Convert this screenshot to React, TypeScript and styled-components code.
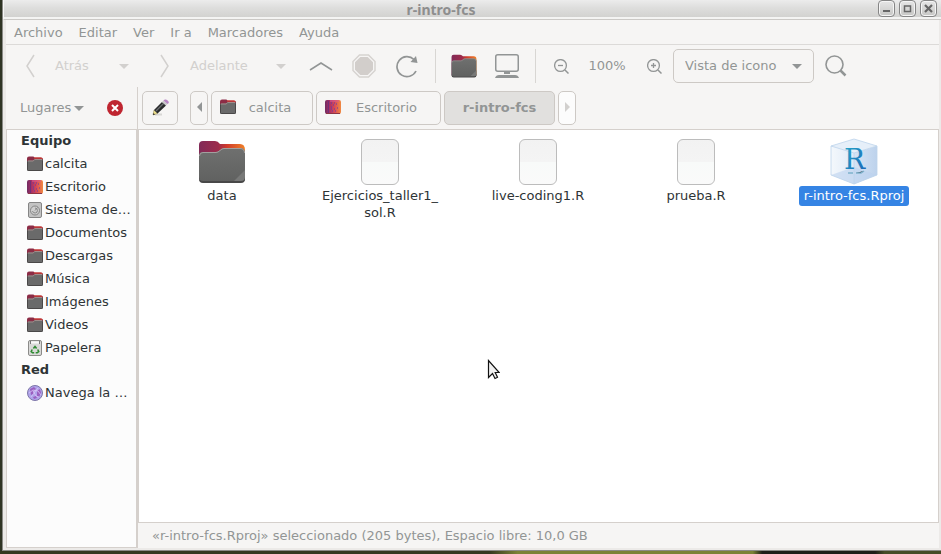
import React, { useId } from "react";
import styled, { createGlobalStyle, css } from "styled-components";

const GlobalStyle = createGlobalStyle`
  *, *::before, *::after { box-sizing: border-box; }
  body {
    margin: 0;
    font: 13px/17px "DejaVu Sans", sans-serif;
    color: #2e3436;
  }
  button, select { font: inherit; color: inherit; }
  svg { display: block; flex: none; }
`;

const color = {
  bg: "#f6f5f4",
  frame: "#eceae8",
  border: "#d5d0cc",
  muted: "#929595",
  disabled: "#d2d0ce",
  selected: "#3584e4",
};

/* ---------- window frame ---------- */

const Desktop = styled.div`
  min-height: 100vh;
  display: flex;
  padding: 0 0 3px 2px;
  background:
    linear-gradient(90deg, #34381f 0 52%, #7b8236 55% 80%, #1d1e18 81% 93%, #454b26 94%) bottom / 100% 3px no-repeat,
    #2f3424;
`;

const Window = styled.div`
  flex: 1;
  min-width: 0;
  display: flex;
  flex-direction: column;
  background: ${color.frame};
  border-left: 1px solid #8a8a86;
  border-bottom: 1px solid #8a8a86;
`;

const TitleBar = styled.header`
  display: flex;
  height: 20px;
  padding-right: 4px;
  border-left: 1px solid #f7f7f7;
  border-bottom: 1px solid #cbc9c6;
  background: linear-gradient(#ececec, #dededd 40%, #d2d2d0 90%, #f4f4f3 91%);
`;

const Title = styled.h1`
  flex: 1;
  margin: 0;
  font: bold 14px/19px "Noto Sans", sans-serif;
  text-align: center;
  color: #8e8e8e;
`;

const WindowControls = styled.div`
  display: flex;
  gap: 4px;
`;

const ControlButton = styled.button`
  display: grid;
  place-items: center;
  width: 17px;
  height: 17px;
  padding: 0;
  border: 1px solid #858585;
  border-radius: 4px;
  background: linear-gradient(#e6e6e6, #c6c6c4);
  box-shadow: inset 0 0 0 1px #f5f5f5;
`;

const Content = styled.div`
  flex: 1;
  display: flex;
  flex-direction: column;
  margin: 0 2px 2px 3px;
  background: ${color.bg};
  color: ${color.muted};
`;

/* ---------- menu and toolbar ---------- */

const MenuBar = styled.nav`
  display: flex;
  border-bottom: 1px solid #dcdad8;
`;

const MenuItem = styled.button`
  height: 24px;
  padding: 0 8px;
  border: 0;
  background: none;
`;

const ToolBar = styled.div`
  display: flex;
  align-items: center;
  height: 42px;
  padding-left: 19px;
`;

const ToolButton = styled.button<{ $width: number }>`
  display: flex;
  align-items: center;
  justify-content: center;
  gap: 20px;
  flex: none;
  width: ${(p) => p.$width}px;
  height: 34px;
  padding: 0;
  border: 0;
  background: none;
  &:disabled { color: ${color.disabled}; }
`;

const HistoryButton = styled(ToolButton)`
  justify-content: flex-start;
  padding-bottom: 1px;
`;

const Spacer = styled.div<{ $width: number }>`
  flex: none;
  width: ${(p) => p.$width}px;
`;

const Separator = styled.div<{ $gap: number }>`
  flex: none;
  width: 1px;
  height: 34px;
  margin: 0 ${(p) => p.$gap}px;
  background: #d8d6d3;
`;

const ZoomValue = styled.span`
  flex: none;
  width: 56px;
  padding-bottom: 1px;
  text-align: center;
`;

const DropDown = styled.div`
  display: inline-grid;
  align-items: center;
  flex: none;
  > * { grid-area: 1 / 1; }
  > svg { justify-self: end; pointer-events: none; }
`;

const ViewDropDown = styled(DropDown)`
  width: 141px;
  margin: 0 5px 0 2px;
  > svg { margin-right: 12px; }
`;

const outlined = css`
  border: 1px solid #cdc9c5;
  border-radius: 5px;
`;

const ViewSelect = styled.select`
  appearance: none;
  ${outlined}
  width: 100%;
  height: 34px;
  padding: 0 11px 2px;
  background: transparent;
`;

/* ---------- body ---------- */

const Body = styled.div`
  flex: 1;
  display: grid;
  grid-template-columns: 132px minmax(0, 1fr);
`;

const Column = styled.div`
  display: flex;
  flex-direction: column;
  min-width: 0;
`;

const SideHeader = styled.div`
  display: flex;
  align-items: center;
  justify-content: space-between;
  height: 42px;
  padding: 0 14px;
  border-right: 1px solid ${color.border};
`;

const PlacesDropDown = styled(DropDown)`
  width: 64px;
`;

const PlacesSelect = styled.select`
  appearance: none;
  width: 100%;
  padding: 0 0 2px;
  border: 0;
  background: transparent;
`;

const IconButton = styled.button`
  padding: 0;
  border: 0;
  background: none;
`;

const Places = styled.nav`
  flex: 1;
  border: 1px solid ${color.border};
  border-right-width: 2px;
  background: #fcfcfc;
  color: #2e3436;
`;

const PlacesHeading = styled.h2`
  margin: 0;
  padding-left: 14px;
  font: bold 13px/22px "DejaVu Sans", sans-serif;
`;

const PlacesList = styled.ul`
  list-style: none;
  margin: 0;
  padding: 0 0 0 20px;
`;

const PlaceLink = styled.a`
  display: flex;
  align-items: center;
  gap: 2px;
  height: 23px;
  color: inherit;
  text-decoration: none;
  white-space: nowrap;
`;

const PathBar = styled.div`
  display: flex;
  align-items: center;
  gap: 3px;
  height: 42px;
  padding-left: 4px;
`;

const PathButton = styled.button<{ $width: number; $current?: boolean }>`
  ${outlined}
  display: flex;
  align-items: center;
  justify-content: center;
  flex: none;
  width: ${(p) => p.$width}px;
  height: 34px;
  padding: 0 8px 2px;
  background: ${(p) => (p.$current ? "#e1e0de" : "transparent")};
  font-weight: ${(p) => (p.$current ? "bold" : "normal")};
  > span { flex: 1; }
`;

const EditButton = styled(PathButton)`
  margin-right: 9px;
`;

const NextButton = styled(PathButton)`
  background: #fcfcfc;
`;

const Files = styled.main`
  flex: 1;
  display: grid;
  grid-template-columns: repeat(auto-fill, 158px);
  align-content: start;
  padding: 8px 0 0 4px;
  border: 1px solid ${color.border};
  background: #fff;
  color: #2e3436;
`;

const FileItem = styled.a`
  display: flex;
  flex-direction: column;
  align-items: center;
  color: inherit;
  text-decoration: none;
`;

const FileLabel = styled.span<{ $selected?: boolean }>`
  max-width: 130px;
  padding: 1px 5px 2px;
  border-radius: 3px;
  text-align: center;
  overflow-wrap: break-word;
  ${(p) => p.$selected && css`
    background: ${color.selected};
    color: #fff;
  `}
`;

const StatusBar = styled.footer`
  height: 25px;
  padding: 0 14px;
  line-height: 25px;
`;

const Pointer = styled.svg`
  position: absolute;
  left: 487px;
  top: 359px;
  pointer-events: none;
`;

/* ---------- icons ---------- */

const Triangle = () => (
  <svg width="10" height="5" viewBox="0 0 10 5"><path d="M0 0h10L5 5z" fill="currentColor" /></svg>
);

const SideTriangle = ({ right }: { right?: boolean }) => (
  <svg width="5" height="10" viewBox="0 0 5 10">
    <path d={right ? "M0 0l5 5-5 5z" : "M5 0L0 5l5 5z"} fill={right ? color.disabled : color.muted} />
  </svg>
);

const Chevron = ({ d, w, h }: { d: string; w: number; h: number }) => (
  <svg width={w} height={h} viewBox={`0 0 ${w} ${h}`} fill="none" stroke="currentColor" strokeWidth="1.5"><path d={d} /></svg>
);

function Folder({ size }: { size: number }) {
  const id = useId();
  return (
    <svg width={size} height={size} viewBox="0 0 48 48">
      <defs>
        <linearGradient id={id + "b"}>
          <stop offset="0" stopColor="#812a57" />
          <stop offset=".42" stopColor="#9d2b4b" />
          <stop offset=".6" stopColor="#cf3a2c" />
          <stop offset="1" stopColor="#f08228" />
        </linearGradient>
        <linearGradient id={id + "f"} x2="0" y2="1">
          <stop offset="0" stopColor="#6f706f" />
          <stop offset="1" stopColor="#606160" />
        </linearGradient>
      </defs>
      <path d="M1 41V7q0-4 4-4h12q3 0 5 3h20q5 0 5 6v29z" fill={`url(#${id}b)`} />
      <path d="M1 18q0-4 4-4h13q2 0 4-2t4-2h16q5 0 5 5v25q0 4-4 4H5q-4 0-4-4z" fill={`url(#${id}f)`} />
      <path d="M35 44l12-12v8q0 4-4 4z" fill="#787978" />
      <path d="M1 39v2q0 4 4 4h38q4 0 4-4v-2q0 4-4 4H5q-4 0-4-4z" fill="#484848" />
      <path d="M1.500 18q0-3.500 3.500-3.500h13q2 0 4-2t4-2h16q4.500 0 4.500 4.500" fill="none" stroke="#a2a09f" />
    </svg>
  );
}

const SmallFolder = () => (
  <svg width="16" height="16" viewBox="0 0 16 16">
    <path d="M0 14V2.500Q0 .5 2 .5h4q1 0 1.500 1H14q2 0 2 2V14z" fill="#8c2c46" />
    <path d="M7 2h7q1 0 1.200 1" fill="none" stroke="#e0402e" />
    <path d="M0 6q0-1.500 1.500-1.500H6L7.500 3H14q2 0 2 2v8.500q0 1.500-1.500 1.500h-13Q0 15 0 13.500z" fill="#6a6a6a" />
    <path d="M.5 5.500v8q0 1 1 1h13q1 0 1-1v-9" fill="none" stroke="#4a4848" />
    <path d="M1 5h5.200l1.500-1.500H15" fill="none" stroke="#a08c8a" />
  </svg>
);

function DesktopIcon() {
  const id = useId();
  return (
    <svg width="16" height="16" viewBox="0 0 16 16">
      <defs>
        <linearGradient id={id}>
          <stop offset="0" stopColor="#702c61" />
          <stop offset=".25" stopColor="#a32e68" />
          <stop offset=".6" stopColor="#d94a55" />
          <stop offset="1" stopColor="#f08a42" />
        </linearGradient>
      </defs>
      <rect y="1" width="16" height="14" rx="2" fill={`url(#${id})`} />
      <path d="M3.500 2v12" stroke="#6f3179" />
      <path d="M5 2h9" stroke="#d85c9a" />
      <path d="M6 4h1M8 6h1M6 8h1M9 10h1M7 12h1M11 5h1M12 9h1M10 12h1M6 10h1M9 4h1" stroke="#5d3bb0" />
      <path d="M1 14.500h14" stroke="#8d3544" />
    </svg>
  );
}

const DriveIcon = () => (
  <svg width="16" height="16" viewBox="0 0 16 16" fill="none" stroke="#858585">
    <rect x="1.500" y=".5" width="13" height="15" rx="1.500" fill="#c3c3c3" />
    <circle cx="8" cy="8.500" r="4.500" fill="#cfcfcf" />
    <path d="M5.500 9a2.500 2.500 0 1 0 2.500-3M8 8.500l2.500-3" />
  </svg>
);

const TrashIcon = () => (
  <svg width="16" height="16" viewBox="0 0 16 16">
    <rect x="1.500" y=".5" width="13" height="15" rx="1.500" fill="#d9d9d8" stroke="#8b8b89" />
    <path d="M3 2.500h10" stroke="#f9f9f9" strokeWidth="2" />
    <path d="M3.500 1v3M12.500 1v3" stroke="#777" />
    <path d="M6.400 8.500L8 6.500l1.600 2M10.700 9.500l1 2-1.500 1.300H8.700M5.200 9.500l-1 2 1.300 1.300h1.700" fill="none" stroke="#2f8b32" strokeWidth="1.600" />
  </svg>
);

const NetworkIcon = () => (
  <svg width="16" height="16" viewBox="0 0 16 16">
    <circle cx="8" cy="8" r="7.500" fill="#b0a4ea" stroke="#7d76a8" />
    <path d="M3 4l4-2 2 2-3 2 1 3-3 1zM10 6l3-2 1 4-2 4-2-1zM6 12l3-1 1 2-3 1z" fill="#9a5fc0" />
    <path d="M2 8l4-3 5 1 3 4M4 12l3-4 4-5M6 6l3 5 3 1" fill="none" stroke="#d8c4f6" strokeWidth=".8" />
  </svg>
);

const CloseIcon = () => (
  <svg width="16" height="16" viewBox="0 0 16 16">
    <circle cx="8" cy="8" r="8" fill="#bf2530" />
    <path d="M5 5l6 6M11 5l-6 6" stroke="#fff" strokeWidth="2" />
  </svg>
);

const PencilIcon = () => (
  <svg width="17" height="17" viewBox="0 0 17 17">
    <path d="M3 15.500h7" stroke="#d8d7d5" strokeWidth="2" />
    <path d="M1 16l1-5 3.500 3.500z" fill="#efe08b" stroke="#8d8450" strokeWidth=".5" />
    <path d="M1 16l.5-2L3 15.500z" fill="#222" />
    <path d="M2 11l8-8 4 3.500-8.500 8z" fill="#292b2c" />
    <path d="M4 12l8-8" stroke="#6b6e70" strokeWidth="1.300" />
    <path d="M10 3l1.500-1.500L15.500 5 14 6.500z" fill="#c9c9ca" />
    <path d="M11.500 1.500q1-1.500 2.500-1t2.500 2T15.500 5z" fill="#b987c5" />
  </svg>
);

const StopIcon = () => (
  <svg width="24" height="24" viewBox="0 0 24 24">
    <path d="M7.500 1h9L23 7.500v9L16.500 23h-9L1 16.500v-9z" fill="none" stroke="#d6d3d0" strokeWidth="1.500" />
    <path d="M8.300 3h7.400L21 8.300v7.400L15.700 21H8.300L3 15.700V8.300z" fill="#d2cecb" />
  </svg>
);

const ReloadIcon = () => (
  <svg width="24" height="24" viewBox="0 0 24 24">
    <path d="M19 5.500A10 10 0 1 0 21 17" fill="none" stroke={color.muted} strokeWidth="1.700" />
    <path d="M21 2l1.500 7-7-1z" fill={color.muted} />
  </svg>
);

const ComputerIcon = () => (
  <svg width="24" height="24" viewBox="0 0 24 24">
    <rect x=".75" y=".75" width="22.500" height="16.500" rx="2" fill="none" stroke={color.muted} strokeWidth="1.500" />
    <path d="M9 18h6v2H9zM0 24q1-3 4-3h16q3 0 4 3z" fill={color.muted} />
  </svg>
);

const ZoomIcon = ({ plus }: { plus?: boolean }) => (
  <svg width="15" height="15" viewBox="0 0 15 15" fill="none" stroke={color.muted} strokeWidth="1.300">
    <circle cx="6.500" cy="6.500" r="5.900" />
    <path d={plus ? "M4 6.500h5M6.500 4v5" : "M4 6.500h5"} />
    <path d="M11 11l3.500 3.500" strokeWidth="1.500" />
  </svg>
);

const SearchIcon = () => (
  <svg width="22" height="22" viewBox="0 0 22 22" fill="none" stroke={color.muted}>
    <circle cx="9.500" cy="9.500" r="8.500" strokeWidth="1.600" />
    <path d="M15.500 15.500l5 5" strokeWidth="2.500" />
  </svg>
);

function BlankFile() {
  const id = useId();
  return (
    <svg width="48" height="48" viewBox="0 0 48 48">
      <defs>
        <linearGradient id={id} x2="0" y2="1">
          <stop offset="0" stopColor="#f2f2f2" />
          <stop offset=".5" stopColor="#f4f4f4" />
          <stop offset=".5" stopColor="#f8faf9" />
          <stop offset="1" stopColor="#fafafa" />
        </linearGradient>
      </defs>
      <rect x="5.500" y="1.500" width="37" height="45" rx="5.500" fill={`url(#${id})`} stroke="#bcbcbc" />
    </svg>
  );
}

function ProjectFile() {
  const id = useId();
  return (
    <svg width="48" height="48" viewBox="0 0 48 48">
      <defs>
        <linearGradient id={id + "l"}>
          <stop offset="0" stopColor="#f4f8fc" />
          <stop offset="1" stopColor="#dfeaf7" />
        </linearGradient>
        <linearGradient id={id + "r"}>
          <stop offset="0" stopColor="#d5e4f5" />
          <stop offset="1" stopColor="#bdd2ec" />
        </linearGradient>
        <linearGradient id={id + "t"} x2="1" y2="1">
          <stop offset="0" stopColor="#26a9c9" />
          <stop offset="1" stopColor="#1b62b5" />
        </linearGradient>
      </defs>
      <path d="M1 8l23 7v31L1 37z" fill={`url(#${id}l)`} />
      <path d="M47 8l-23 7v31l23-9z" fill={`url(#${id}r)`} />
      <path d="M24 1L1 8l23 7 23-7z" fill="#e6eff9" />
      <path d="M24 29L1 37l23 9 23-9z" fill="#bcd2ee" opacity=".6" />
      <path d="M24 1L1 8v29l23 9 23-9V8zM1 8l23 7 23-7M24 15v31" fill="none" stroke="#bdd3eb" strokeWidth=".8" />
      <path d="M18 35h5M26 35h5l3-2" stroke="#7fb3cd" strokeWidth="1.500" />
      <text x="24.500" y="31" textAnchor="middle" fontFamily="'DejaVu Serif', serif" fontSize="28" fill={`url(#${id}t)`}>R</text>
    </svg>
  );
}

/* ---------- data ---------- */

type Place = [string, React.ComponentType];

const menus = ["Archivo", "Editar", "Ver", "Ir a", "Marcadores", "Ayuda"];

const computer: Place[] = [
  ["calcita", SmallFolder],
  ["Escritorio", DesktopIcon],
  ["Sistema de…", DriveIcon],
  ["Documentos", SmallFolder],
  ["Descargas", SmallFolder],
  ["Música", SmallFolder],
  ["Imágenes", SmallFolder],
  ["Videos", SmallFolder],
  ["Papelera", TrashIcon],
];

const network: Place[] = [["Navega la …", NetworkIcon]];

const files: { name: React.ReactNode; icon: React.ReactNode; selected?: boolean }[] = [
  { name: "data", icon: <Folder size={48} /> },
  { name: <>Ejercicios_taller1_<wbr />sol.R</>, icon: <BlankFile /> },
  { name: "live-coding1.R", icon: <BlankFile /> },
  { name: "prueba.R", icon: <BlankFile /> },
  { name: "r-intro-fcs.Rproj", icon: <ProjectFile />, selected: true },
];

const PlaceItems = ({ items }: { items: Place[] }) => (
  <PlacesList>
    {items.map(([name, Icon]) => (
      <li key={name}><PlaceLink href="#"><Icon />{name}</PlaceLink></li>
    ))}
  </PlacesList>
);

export default function App() {
  return (
    <Desktop>
      <GlobalStyle />
      <Window>
        <TitleBar>
          <Title>r-intro-fcs</Title>
          <WindowControls>
            <ControlButton aria-label="Minimizar">
              <svg width="9" height="9"><path d="M1 7h7" stroke="#666" strokeWidth="2" /></svg>
            </ControlButton>
            <ControlButton aria-label="Maximizar">
              <svg width="9" height="9"><path d="M1.500 2h6v5.500h-6z" fill="none" stroke="#666" strokeWidth="1.500" /></svg>
            </ControlButton>
            <ControlButton aria-label="Cerrar">
              <svg width="9" height="9"><path d="M1 1l7 7M8 1L1 8" stroke="#666" strokeWidth="2.200" /></svg>
            </ControlButton>
          </WindowControls>
        </TitleBar>
        <Content>
          <MenuBar>
            {menus.map((m) => <MenuItem key={m}>{m}</MenuItem>)}
          </MenuBar>
          <ToolBar>
            <HistoryButton $width={82} disabled><Chevron w={10} h={24} d="M9 1L2 12l7 11" />Atrás</HistoryButton>
            <ToolButton $width={34} disabled aria-label="Historial atrás"><Triangle /></ToolButton>
            <Spacer $width={19} />
            <HistoryButton $width={108} disabled><Chevron w={10} h={24} d="M1 1l7 11-7 11" />Adelante</HistoryButton>
            <ToolButton $width={26} disabled aria-label="Historial adelante"><Triangle /></ToolButton>
            <ToolButton $width={54} aria-label="Subir"><Chevron w={24} h={10} d="M1 9l11-7 11 7" /></ToolButton>
            <ToolButton $width={32} disabled aria-label="Detener"><StopIcon /></ToolButton>
            <ToolButton $width={54} aria-label="Recargar"><ReloadIcon /></ToolButton>
            <Separator $gap={1} />
            <ToolButton $width={54} aria-label="Carpeta personal"><Folder size={26} /></ToolButton>
            <ToolButton $width={32} aria-label="Equipo"><ComputerIcon /></ToolButton>
            <Separator $gap={12} />
            <ToolButton $width={26} aria-label="Reducir"><ZoomIcon /></ToolButton>
            <Spacer $width={5} />
            <ZoomValue>100%</ZoomValue>
            <Spacer $width={2} />
            <ToolButton $width={34} aria-label="Ampliar"><ZoomIcon plus /></ToolButton>
            <ViewDropDown>
              <ViewSelect aria-label="Vista"><option>Vista de icono</option></ViewSelect>
              <Triangle />
            </ViewDropDown>
            <ToolButton $width={34} aria-label="Buscar"><SearchIcon /></ToolButton>
          </ToolBar>
          <Body>
            <Column>
              <SideHeader>
                <PlacesDropDown>
                  <PlacesSelect aria-label="Panel lateral"><option>Lugares</option></PlacesSelect>
                  <Triangle />
                </PlacesDropDown>
                <IconButton aria-label="Cerrar panel"><CloseIcon /></IconButton>
              </SideHeader>
              <Places>
                <PlacesHeading>Equipo</PlacesHeading>
                <PlaceItems items={computer} />
                <PlacesHeading>Red</PlacesHeading>
                <PlaceItems items={network} />
              </Places>
            </Column>
            <Column>
              <PathBar>
                <EditButton $width={36} aria-label="Editar ruta"><PencilIcon /></EditButton>
                <PathButton $width={18} aria-label="Anterior"><SideTriangle /></PathButton>
                <PathButton $width={102}><SmallFolder /><span>calcita</span></PathButton>
                <PathButton $width={125}><DesktopIcon /><span>Escritorio</span></PathButton>
                <PathButton $width={111} $current>r-intro-fcs</PathButton>
                <NextButton $width={18} disabled aria-label="Siguiente"><SideTriangle right /></NextButton>
              </PathBar>
              <Files>
                {files.map((f, i) => (
                  <FileItem href="#" key={i}>
                    {f.icon}
                    <FileLabel $selected={f.selected}>{f.name}</FileLabel>
                  </FileItem>
                ))}
              </Files>
              <StatusBar>«r-intro-fcs.Rproj» seleccionado (205 bytes), Espacio libre: 10,0 GB</StatusBar>
            </Column>
          </Body>
        </Content>
      </Window>
      <Pointer width="13" height="21" viewBox="0 0 13 21">
        <path d="M1.500 1.500v17l4-4 2.500 5 2.500-1.200L8.200 13.500h4z" fill="#f1f1f1" stroke="#111" strokeWidth="1.200" />
      </Pointer>
    </Desktop>
  );
}
